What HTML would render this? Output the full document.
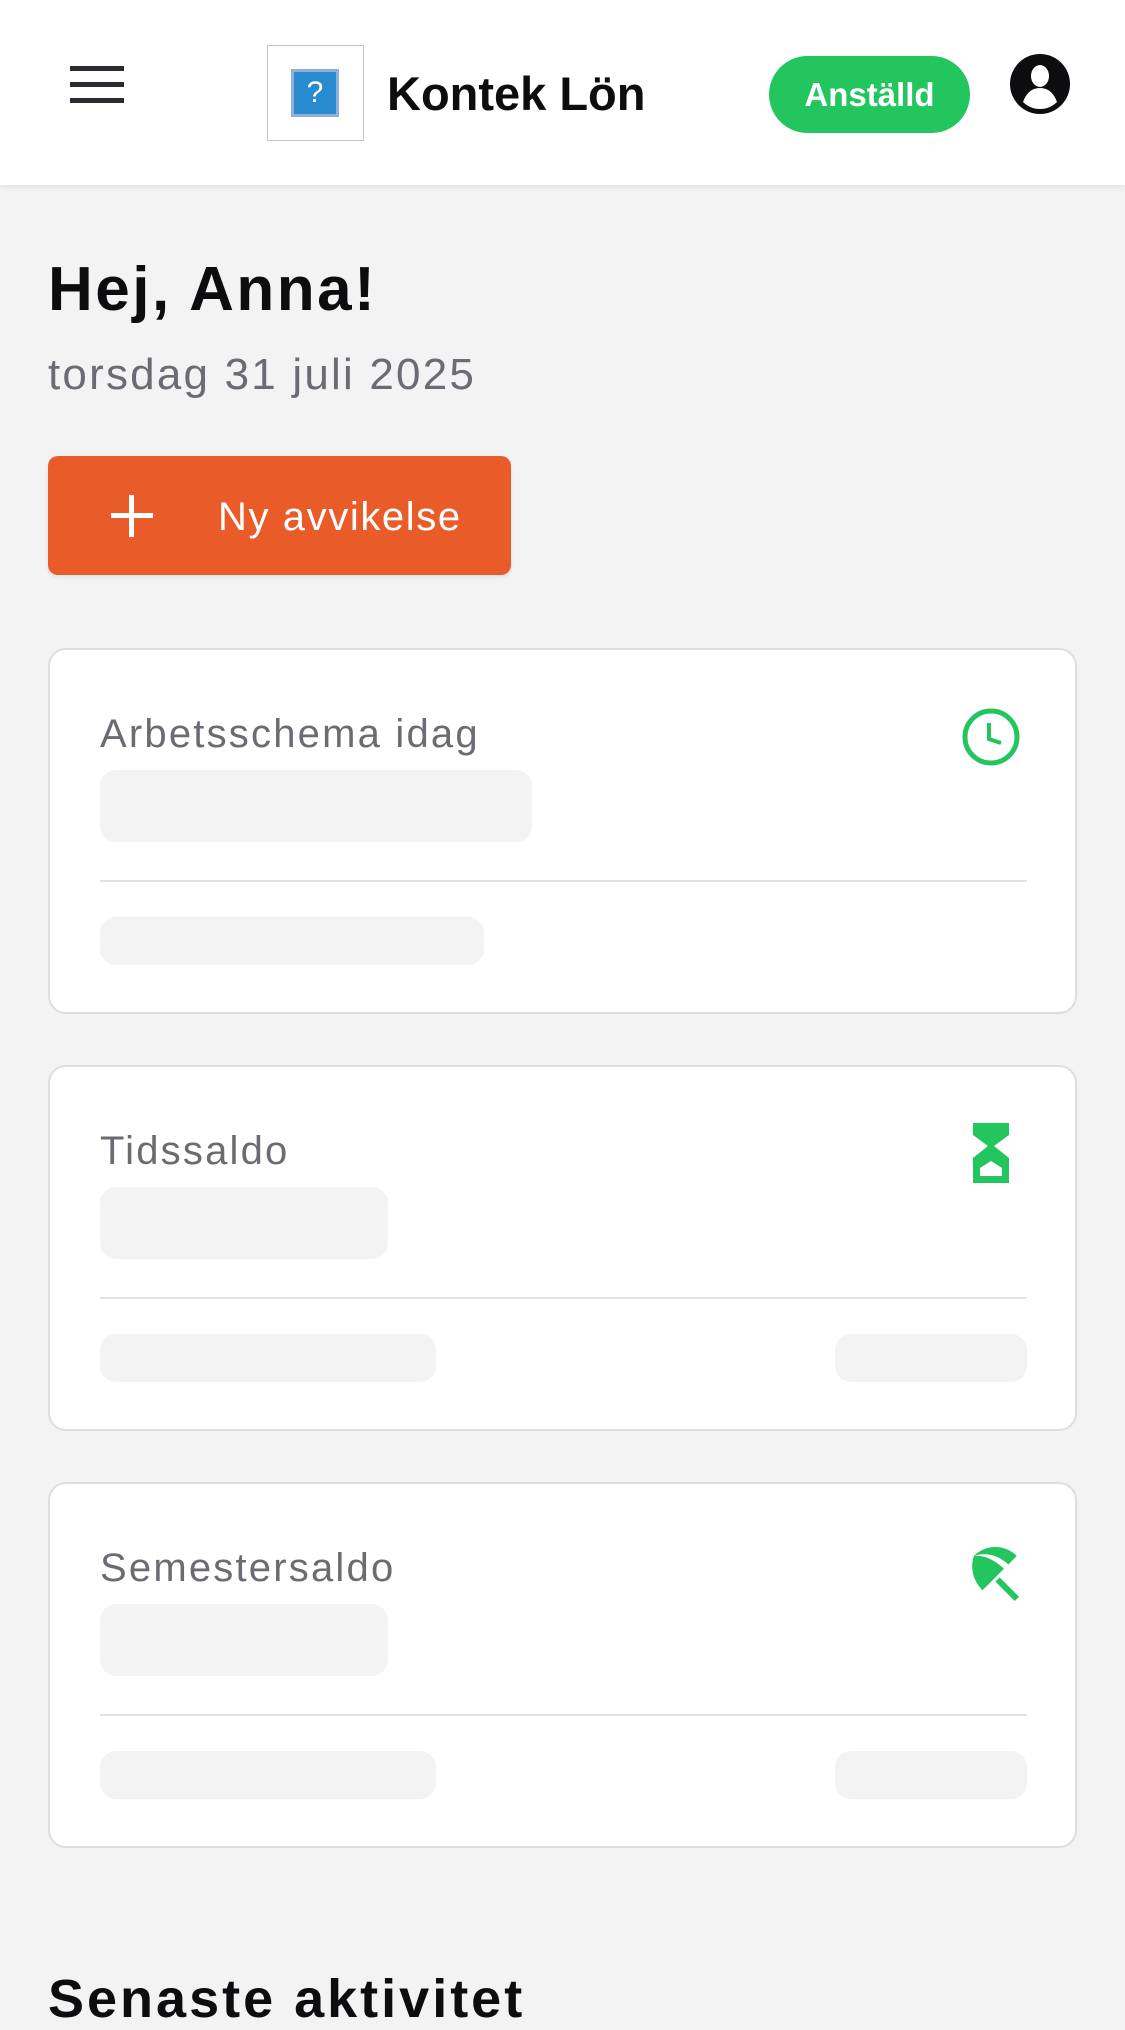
<!DOCTYPE html>
<html><head><meta charset="utf-8"><style>
*{margin:0;padding:0;box-sizing:border-box}
body{width:1125px;height:2001px;overflow:hidden;background:#f3f3f4;font-family:"Liberation Sans",sans-serif;position:relative}
.a{position:absolute}
.hdr{left:0;top:0;width:1125px;height:185px;background:#fff;box-shadow:0 2px 6px rgba(0,0,0,.08)}
.bar{left:70px;width:54px;height:5px;background:#2b2b36}
.card{left:48px;width:1029px;height:366px;background:#fff;border:2px solid #dedee0;border-radius:18px}
.ttl{left:50px;top:62px;font-size:40px;color:#6b6b73;letter-spacing:2.2px}
.sk{background:#f3f3f4;border-radius:16px}
.div{left:50px;width:927px;height:2px;background:#e2e2e4}
</style></head><body>
<div class="a hdr">
 <div class="a bar" style="top:66px"></div>
 <div class="a bar" style="top:82px"></div>
 <div class="a bar" style="top:98px"></div>
 <div class="a" style="left:267px;top:45px;width:97px;height:96px;border:1px solid #c4c4c8"></div>
 <div class="a" style="left:291px;top:69px;width:48px;height:48px;border:3px solid #8fb0d8;background:#2a8ad0;color:#fff;font-size:30px;text-align:center;line-height:42px">?</div>
 <div class="a" style="left:387px;top:66px;font-size:47px;font-weight:bold;color:#0d0d0f">Kontek Lön</div>
 <div class="a" style="left:769px;top:56px;width:201px;height:77px;border-radius:39px;background:#22c55e;color:#fff;font-size:33px;font-weight:bold;text-align:center;line-height:77px">Anställd</div>
 <svg class="a" style="left:1010px;top:54px" width="60" height="60" viewBox="0 0 60 60"><circle cx="30" cy="30" r="30" fill="#0d0d0f"/><ellipse cx="30" cy="22" rx="9" ry="11" fill="#fff"/><path d="M13 48 Q18 34 30 34 Q42 34 47 48 Q40 55 30 55 Q20 55 13 48Z" fill="#fff"/></svg>
</div>
<div class="a" style="left:48px;top:254px;font-size:62px;font-weight:bold;color:#0d0d0f;letter-spacing:2.5px">Hej, Anna!</div>
<div class="a" style="left:48px;top:350px;font-size:44px;color:#6b6b73;letter-spacing:2.2px">torsdag 31 juli 2025</div>
<div class="a" style="left:48px;top:456px;width:463px;height:119px;background:#ea5b2a;border-radius:10px;box-shadow:0 2px 4px rgba(0,0,0,.08)">
 <div class="a" style="left:63px;top:57px;width:42px;height:5px;background:#fff"></div>
 <div class="a" style="left:81px;top:39px;width:5px;height:42px;background:#fff"></div>
 <div class="a" style="left:170px;top:39px;font-size:40px;color:#fff;letter-spacing:1.6px">Ny avvikelse</div>
</div>

<div class="a card" style="top:648px">
 <div class="a ttl">Arbetsschema idag</div>
 <svg class="a" style="left:910px;top:56px" width="62" height="62" viewBox="0 0 62 62"><circle cx="31" cy="31" r="26" fill="none" stroke="#22c55e" stroke-width="5"/><path d="M29 17 V33 L41 37" fill="none" stroke="#22c55e" stroke-width="4"/></svg>
 <div class="a sk" style="left:50px;top:120px;width:432px;height:72px"></div>
 <div class="a div" style="top:230px"></div>
 <div class="a sk" style="left:50px;top:267px;width:384px;height:48px"></div>
</div>

<div class="a card" style="top:1065px">
 <div class="a ttl">Tidssaldo</div>
 <svg class="a" style="left:922px;top:55px" width="38" height="62" viewBox="0 0 38 62"><path d="M1 1 H37 V13 L22 24 L37 36 V61 H1 V36 L16 24 L1 13Z M8 46 V54 H30 V46 L19 39Z" fill="#22c55e" fill-rule="evenodd"/></svg>
 <div class="a sk" style="left:50px;top:120px;width:288px;height:72px"></div>
 <div class="a div" style="top:230px"></div>
 <div class="a sk" style="left:50px;top:267px;width:336px;height:48px"></div>
 <div class="a sk" style="left:785px;top:267px;width:192px;height:48px"></div>
</div>

<div class="a card" style="top:1482px">
 <div class="a ttl">Semestersaldo</div>
 <svg class="a" style="left:906px;top:54px" width="72" height="72" viewBox="0 0 24 24"><path fill="#22c55e" d="M13.127 14.56l1.43-1.43 6.44 6.443L19.57 21zm4.293-5.73l2.86-2.86c-3.95-3.95-10.35-3.96-14.3-.02 3.93-1.3 8.31-.25 11.44 2.88zM5.95 5.98c-1.3 3.93-.25 8.31 2.88 11.44l2.86-2.86C9.98 12.85 8.99 10.49 5.95 5.98zm.02-.02l-.01.01c-.38 3.01 1.17 6.88 4.3 10.02l5.73-5.73c-3.13-3.13-7.01-4.68-10.02-4.3z"/></svg>
 <div class="a sk" style="left:50px;top:120px;width:288px;height:72px"></div>
 <div class="a div" style="top:230px"></div>
 <div class="a sk" style="left:50px;top:267px;width:336px;height:48px"></div>
 <div class="a sk" style="left:785px;top:267px;width:192px;height:48px"></div>
</div>

<div class="a" style="left:48px;top:1968px;font-size:54px;font-weight:bold;color:#0d0d0f;letter-spacing:3px">Senaste aktivitet</div>
</body></html>
